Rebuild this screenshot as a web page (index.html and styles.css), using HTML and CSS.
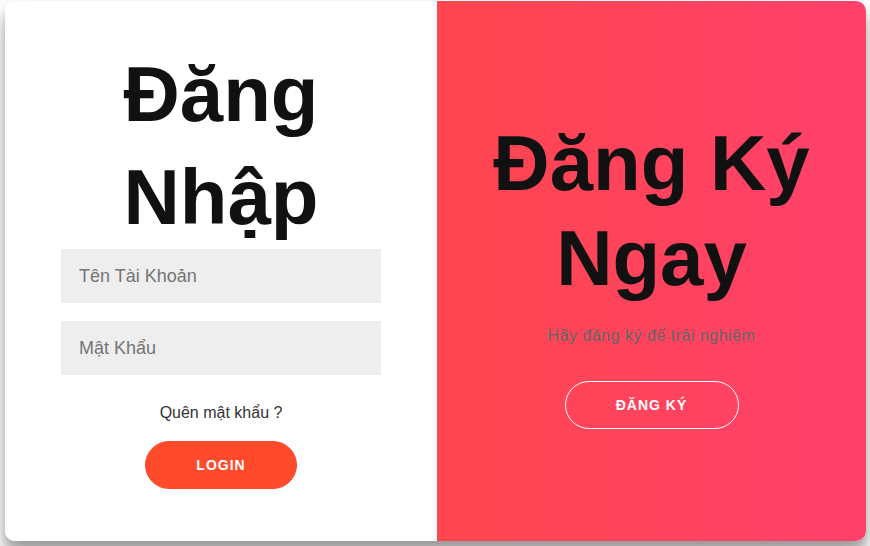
FILE: index.html
```html
<!DOCTYPE html>
<html lang="vi">
<head>
<meta charset="utf-8">
<title>Đăng Nhập</title>
<link rel="stylesheet" href="styles.css">
</head>
<body>
<div class="card">
  <form class="panel login">
    <h1 class="title title-login">Đăng Nhập</h1>
    <input class="field" type="text" placeholder="Tên Tài Khoản">
    <input class="field field-gap" type="password" placeholder="Mật Khẩu">
    <a class="forgot" href="#">Quên mật khẩu ?</a>
    <button class="btn btn-solid" type="button">Login</button>
  </form>
  <div class="panel signup">
    <h1 class="title title-signup">Đăng Ký Ngay</h1>
    <p class="lead">Hãy đăng ký để trải nghiệm</p>
    <button class="btn btn-ghost" type="button">Đăng Ký</button>
  </div>
</div>
</body>
</html>
```
FILE: styles.css
```css
* { box-sizing: border-box; }
html, body { margin: 0; padding: 0; background: #fff; }
body {
  font-family: "Liberation Sans", Arial, sans-serif;
  width: 870px;
  height: 546px;
  overflow: hidden;
}
.card {
  margin: 1px 0 0 5px;
  width: 861px;
  height: 540px;
  border-radius: 10px;
  overflow: hidden;
  display: grid;
  grid-template-columns: 432px 429px;
  box-shadow: 0 14px 28px rgba(0,0,0,0.25), 0 10px 10px rgba(0,0,0,0.22);
  background: #fff;
}
.panel {
  display: flex;
  flex-direction: column;
  align-items: center;
  margin: 0;
}
.login { padding-top: 42px; background: #fff; }
.signup {
  padding-top: 115px;
  background: linear-gradient(to right, #FF464E, #FF416C);
}
.title {
  margin: 0;
  font-size: 78px;
  font-weight: bold;
  color: #111;
  text-align: center;
}
.title-login { line-height: 103px; width: 240px; }
.title-signup { line-height: 95px; width: 340px; }
.field {
  width: 320px;
  height: 54px;
  border: none;
  background: #eee;
  padding: 0 18px;
  font-family: inherit;
  font-size: 18px;
  color: #333;
  outline: none;
}
.field::placeholder { color: #757575; }
.field-gap { margin-top: 18px; }
.forgot {
  margin-top: 28px;
  font-size: 16px;
  line-height: 19px;
  color: #333;
  text-decoration: none;
}
.btn {
  height: 48px;
  border-radius: 24px;
  font-family: inherit;
  font-size: 14px;
  font-weight: bold;
  letter-spacing: 1px;
  text-transform: uppercase;
  color: #fff;
  cursor: pointer;
}
.btn-solid {
  margin-top: 19px;
  width: 152px;
  padding: 0;
  background: #FF4B2B;
  border: 1px solid #FF4B2B;
}
.btn-ghost {
  margin-top: 35px;
  width: 174px;
  padding: 0;
  background: transparent;
  border: 1px solid #fff;
}
.lead {
  margin: 20px 0 0;
  font-size: 16px;
  line-height: 20px;
  letter-spacing: 0.5px;
  color: #666;
}
```
